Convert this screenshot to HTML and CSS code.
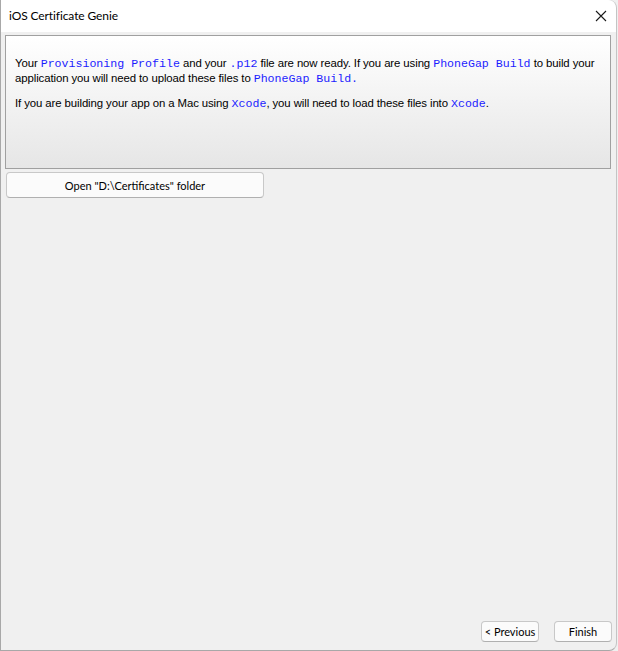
FILE: index.html
```html
<!DOCTYPE html>
<html>
<head>
<meta charset="utf-8">
<link rel="stylesheet" href="styles.css">
</head>
<body>
<div class="window">
  <div class="titlebar">
    <span class="title">iOS Certificate Genie</span>
    <svg class="close" width="12" height="12" viewBox="0 0 12 12"><path d="M1 1 L11 11 M11 1 L1 11" stroke="#1a1a1a" stroke-width="1.1" fill="none"/></svg>
  </div>
  <div class="content">
    <div class="panel">
      <p class="para">Your <code>Provisioning Profile</code> and your <code>.p12</code> file are now ready. If you are using <code>PhoneGap Build</code> to build your<br>application you will need to upload these files to <code>PhoneGap Build.</code></p>
      <p class="para">If you are building your app on a Mac using <code>Xcode</code>, you will need to load these files into <code>Xcode</code>.</p>
    </div>
    <button class="btn wide">Open "D:\Certificates" folder</button>
    <div class="spacer"></div>
    <div class="footer">
      <button class="btn small">&lt; Previous</button>
      <button class="btn small">Finish</button>
    </div>
  </div>
</div>
</body>
</html>
```
FILE: styles.css
```css
html, body {
  margin: 0;
  padding: 0;
  width: 618px;
  height: 651px;
  overflow: hidden;
  background: #f0f0f0;
}
.window {
  box-sizing: border-box;
  width: 617px;
  height: 651px;
  border-left: 1px solid #a8a8a8;
  border-right: 1px solid #c4c4c4;
  border-bottom: 1px solid #a8a8a8;
  border-top-right-radius: 8px;
  border-bottom-right-radius: 8px;
  background: #f0f0f0;
  display: flex;
  flex-direction: column;
  overflow: hidden;
}
.titlebar {
  height: 31px;
  flex: none;
  background: #ffffff;
  display: flex;
  align-items: center;
  justify-content: space-between;
  padding: 0 9px 1px 8px;
  border-top-right-radius: 8px;
}
.title {
  font-family: Lato, "Liberation Sans", sans-serif;
  font-size: 12px;
  letter-spacing: -0.1px;
  color: #000;
}
.close {
  display: block;
}
.content {
  flex: 1;
  display: flex;
  flex-direction: column;
  padding: 3px 5px 8px 4px;
}
.panel {
  height: 134px;
  border: 1px solid #a0a0a0;
  background: linear-gradient(#ffffff, #e6e6e6);
  padding: 20px 9px 0 9px;
  box-sizing: border-box;
  font-family: "Liberation Sans", sans-serif;
  font-size: 11.4px;
  color: #000;
}
.para {
  margin: 0 0 10px 0;
  line-height: 14px;
  white-space: nowrap;
  letter-spacing: -0.1px;
}
code {
  font-family: "Liberation Mono", monospace;
  font-size: 11.6px;
  color: #1c1cff;
  letter-spacing: 0;
}
.btn {
  font-family: Lato, "Liberation Sans", sans-serif;
  font-size: 11px;
  color: #000;
  background: #fbfbfb;
  border: 1px solid #c8c8c8;
  border-bottom-color: #b0b0b0;
  border-radius: 4px;
  padding: 0;
  white-space: nowrap;
}
.wide {
  margin: 3px 0 0 1px;
  width: 258px;
  height: 26px;
}
.spacer {
  flex: 1;
}
.footer {
  display: flex;
  justify-content: flex-end;
  gap: 15px;
  margin-right: -1px;
}
.small {
  width: 58px;
  height: 21px;
  line-height: 19px;
}
```
